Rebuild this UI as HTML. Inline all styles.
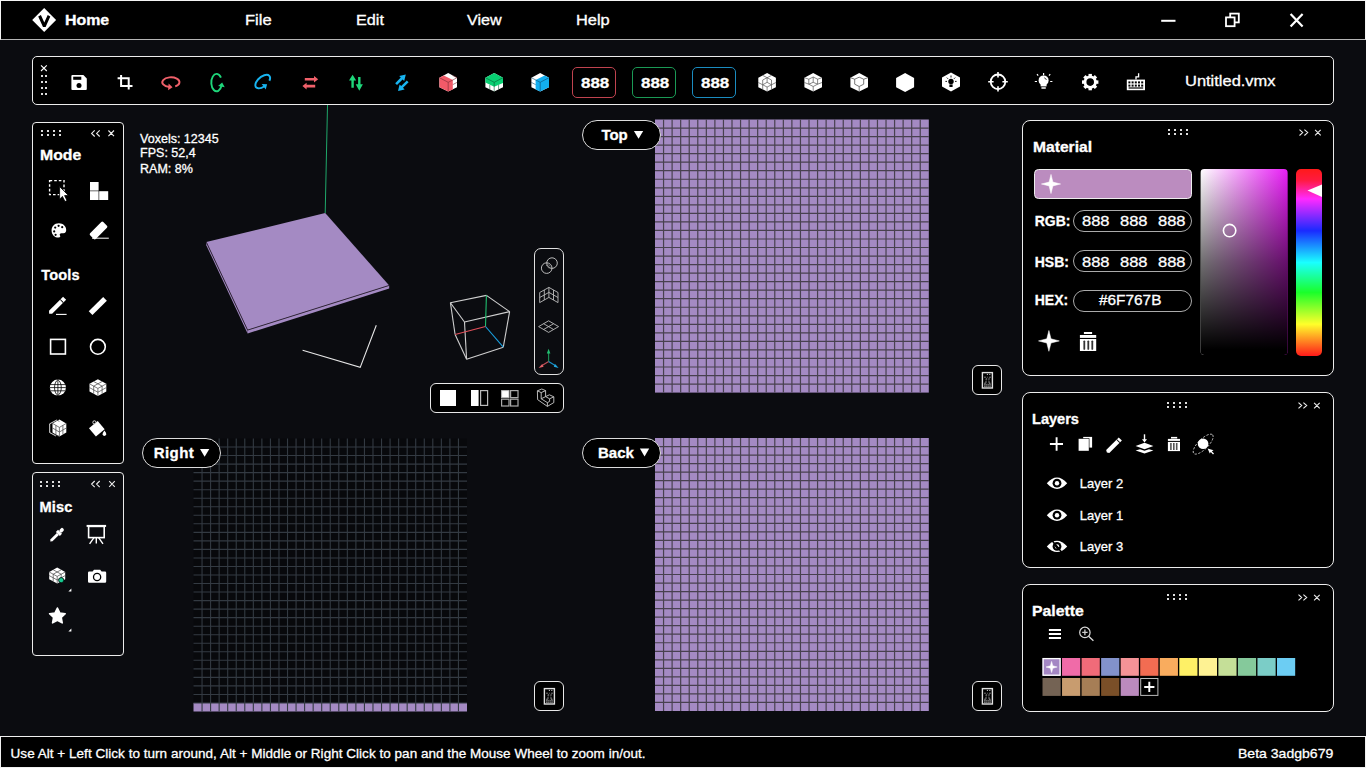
<!DOCTYPE html>
<html><head><meta charset="utf-8">
<style>
*{box-sizing:border-box;margin:0;padding:0}
html,body{width:1366px;height:768px;overflow:hidden;background:#0b0c10;font-family:"Liberation Sans",sans-serif;color:#fff}
.a{position:absolute}
.t{position:absolute;white-space:nowrap;line-height:1;-webkit-text-stroke:0.3px #fff}
svg{position:absolute;left:0;top:0;overflow:visible}
.panel{position:absolute;border:1.5px solid #ececec;background:#000}
.pill{position:absolute;border:1.5px solid #dcdcdc;border-radius:15px;background:#000}
.tab{position:absolute;width:30.2px;height:30.2px;border:1.5px solid #e8e8e8;border-radius:6px;background:#000}
</style></head>
<body>

<div class="a" style="left:0;top:0;width:1366px;height:40px;background:#000;border:1px solid #f4f4f4;border-bottom:1px solid #b4b4b4"></div>
<div class="a" style="left:0;top:736px;width:1366px;height:32px;background:#000;border:1px solid #f0f0f0"></div>
<div class="panel" style="left:32px;top:56px;width:1302px;height:49px;border-radius:5px"></div>
<div class="panel" style="left:32px;top:122px;width:92px;height:342px;border-radius:4px"></div>
<div class="panel" style="left:32px;top:472px;width:92px;height:184px;border-radius:4px;background:#0b0c10"></div>
<div class="panel" style="left:1022px;top:120px;width:312px;height:256px;border-radius:8px"></div>
<div class="panel" style="left:1022px;top:392px;width:312px;height:176px;border-radius:8px"></div>
<div class="panel" style="left:1022px;top:584px;width:312px;height:128px;border-radius:8px"></div>
<svg width="1366" height="768"><rect x="655" y="119.5" width="273.8" height="273.1" fill="#a48ac3"/><path d="M663.56 119.5V392.6M672.11 119.5V392.6M680.67 119.5V392.6M689.23 119.5V392.6M697.78 119.5V392.6M706.34 119.5V392.6M714.89 119.5V392.6M723.45 119.5V392.6M732.01 119.5V392.6M740.56 119.5V392.6M749.12 119.5V392.6M757.67 119.5V392.6M766.23 119.5V392.6M774.79 119.5V392.6M783.34 119.5V392.6M791.90 119.5V392.6M800.46 119.5V392.6M809.01 119.5V392.6M817.57 119.5V392.6M826.12 119.5V392.6M834.68 119.5V392.6M843.24 119.5V392.6M851.79 119.5V392.6M860.35 119.5V392.6M868.91 119.5V392.6M877.46 119.5V392.6M886.02 119.5V392.6M894.57 119.5V392.6M903.13 119.5V392.6M911.69 119.5V392.6M920.24 119.5V392.6M655 128.03H928.8M655 136.57H928.8M655 145.10H928.8M655 153.64H928.8M655 162.17H928.8M655 170.71H928.8M655 179.24H928.8M655 187.78H928.8M655 196.31H928.8M655 204.84H928.8M655 213.38H928.8M655 221.91H928.8M655 230.45H928.8M655 238.98H928.8M655 247.52H928.8M655 256.05H928.8M655 264.58H928.8M655 273.12H928.8M655 281.65H928.8M655 290.19H928.8M655 298.72H928.8M655 307.26H928.8M655 315.79H928.8M655 324.33H928.8M655 332.86H928.8M655 341.39H928.8M655 349.93H928.8M655 358.46H928.8M655 367.00H928.8M655 375.53H928.8M655 384.07H928.8" stroke="#48414f" stroke-width="1.2" fill="none"/><rect x="655" y="438" width="273.8" height="273" fill="#a48ac3"/><path d="M663.56 438V711M672.11 438V711M680.67 438V711M689.23 438V711M697.78 438V711M706.34 438V711M714.89 438V711M723.45 438V711M732.01 438V711M740.56 438V711M749.12 438V711M757.67 438V711M766.23 438V711M774.79 438V711M783.34 438V711M791.90 438V711M800.46 438V711M809.01 438V711M817.57 438V711M826.12 438V711M834.68 438V711M843.24 438V711M851.79 438V711M860.35 438V711M868.91 438V711M877.46 438V711M886.02 438V711M894.57 438V711M903.13 438V711M911.69 438V711M920.24 438V711M655 446.53H928.8M655 455.06H928.8M655 463.59H928.8M655 472.12H928.8M655 480.66H928.8M655 489.19H928.8M655 497.72H928.8M655 506.25H928.8M655 514.78H928.8M655 523.31H928.8M655 531.84H928.8M655 540.38H928.8M655 548.91H928.8M655 557.44H928.8M655 565.97H928.8M655 574.50H928.8M655 583.03H928.8M655 591.56H928.8M655 600.09H928.8M655 608.62H928.8M655 617.16H928.8M655 625.69H928.8M655 634.22H928.8M655 642.75H928.8M655 651.28H928.8M655 659.81H928.8M655 668.34H928.8M655 676.88H928.8M655 685.41H928.8M655 693.94H928.8M655 702.47H928.8" stroke="#48414f" stroke-width="1.2" fill="none"/><rect x="193.5" y="438.5" width="273.5" height="273.0" fill="#08090c"/><rect x="193.5" y="702.95" width="273.5" height="8.55" fill="#a48ac3"/><path d="M202.05 438.5V711.5M210.59 438.5V711.5M219.14 438.5V711.5M227.69 438.5V711.5M236.23 438.5V711.5M244.78 438.5V711.5M253.33 438.5V711.5M261.88 438.5V711.5M270.42 438.5V711.5M278.97 438.5V711.5M287.52 438.5V711.5M296.06 438.5V711.5M304.61 438.5V711.5M313.16 438.5V711.5M321.70 438.5V711.5M330.25 438.5V711.5M338.80 438.5V711.5M347.34 438.5V711.5M355.89 438.5V711.5M364.44 438.5V711.5M372.98 438.5V711.5M381.53 438.5V711.5M390.08 438.5V711.5M398.62 438.5V711.5M407.17 438.5V711.5M415.72 438.5V711.5M424.27 438.5V711.5M432.81 438.5V711.5M441.36 438.5V711.5M449.91 438.5V711.5M458.45 438.5V711.5M193.5 447.03H467.0M193.5 455.56H467.0M193.5 464.09H467.0M193.5 472.62H467.0M193.5 481.16H467.0M193.5 489.69H467.0M193.5 498.22H467.0M193.5 506.75H467.0M193.5 515.28H467.0M193.5 523.81H467.0M193.5 532.34H467.0M193.5 540.88H467.0M193.5 549.41H467.0M193.5 557.94H467.0M193.5 566.47H467.0M193.5 575.00H467.0M193.5 583.53H467.0M193.5 592.06H467.0M193.5 600.59H467.0M193.5 609.12H467.0M193.5 617.66H467.0M193.5 626.19H467.0M193.5 634.72H467.0M193.5 643.25H467.0M193.5 651.78H467.0M193.5 660.31H467.0M193.5 668.84H467.0M193.5 677.38H467.0M193.5 685.91H467.0M193.5 694.44H467.0M193.5 702.97H467.0" stroke="#333a42" stroke-width="1.1" fill="none"/><line x1="327.5" y1="105" x2="325.2" y2="213" stroke="#1fa86a" stroke-width="1"/><polygon points="206.3,242.1 247.6,330.1 247.6,333.4 206.3,245.2" fill="#a48ac3"/><polygon points="247.6,330.1 389.2,285.4 389.2,288.6 247.6,333.4" fill="#a48ac3"/><polygon points="325.2,213.1 389.2,285.4 247.6,330.1 206.3,242.1" fill="#a48ac3"/><polyline points="206.3,242.1 247.6,330.1 389.2,285.4" fill="none" stroke="#2a2030" stroke-width="0.9"/><polyline points="302.6,350.3 360.2,367.4 376.3,325.2" fill="none" stroke="#e6e6e6" stroke-width="1.1"/><line x1="450.4" y1="302.7" x2="486.4" y2="295.4" stroke="#cfcfcf" stroke-width="1.1"/><line x1="486.4" y1="295.4" x2="509.6" y2="311.6" stroke="#cfcfcf" stroke-width="1.1"/><line x1="509.6" y1="311.6" x2="464.5" y2="322" stroke="#cfcfcf" stroke-width="1.1"/><line x1="464.5" y1="322" x2="450.4" y2="302.7" stroke="#cfcfcf" stroke-width="1.1"/><line x1="450.4" y1="302.7" x2="455.1" y2="334.5" stroke="#cfcfcf" stroke-width="1.1"/><line x1="509.6" y1="311.6" x2="503.3" y2="347.2" stroke="#cfcfcf" stroke-width="1.1"/><line x1="464.5" y1="322" x2="466.6" y2="359.2" stroke="#cfcfcf" stroke-width="1.1"/><line x1="455.1" y1="334.5" x2="466.6" y2="359.2" stroke="#cfcfcf" stroke-width="1.1"/><line x1="466.6" y1="359.2" x2="503.3" y2="347.2" stroke="#cfcfcf" stroke-width="1.1"/><line x1="486.4" y1="295.4" x2="485.5" y2="326.5" stroke="#20c070" stroke-width="1.1"/><line x1="485.5" y1="326.5" x2="455.1" y2="334.5" stroke="#e0505a" stroke-width="1.1"/><line x1="485.5" y1="326.5" x2="503.3" y2="347.2" stroke="#1aa0e0" stroke-width="1.1"/></svg>
<div class="pill" style="left:582px;top:120px;width:79px;height:30px"></div>
<div class="pill" style="left:142px;top:438px;width:79px;height:30px"></div>
<div class="pill" style="left:582px;top:438px;width:79px;height:30px"></div>
<div class="tab" style="left:972px;top:365px"></div>
<div class="tab" style="left:534px;top:681px"></div>
<div class="tab" style="left:972px;top:681px"></div>
<div class="a" style="left:534px;top:248px;width:30px;height:127px;border:1.5px solid #e0e0e0;border-radius:7px"></div>
<div class="a" style="left:430px;top:383px;width:134px;height:30px;border:1.5px solid #e8e8e8;border-radius:6px;background:#000"></div>
<svg width="1366" height="768"><polygon points="44.2,8 56.1,20.1 44.2,32.1 32.2,20.1" fill="#fff"/><polygon points="38.2,16.4 40.9,15.0 44.3,22.6 47.7,15.0 50.3,16.4 45.6,27.0 43.0,27.0" fill="#000"/><line x1="1161.2" y1="20.8" x2="1175.5" y2="20.8" stroke="#fff" stroke-width="2"/><rect x="1230.2" y="13.6" width="8.6" height="8.8" fill="none" stroke="#fff" stroke-width="1.8"/><rect x="1226" y="17.4" width="8.6" height="8.8" fill="#000" stroke="#fff" stroke-width="1.8"/><path d="M1290.6 14 L1302.6 26.6 M1302.6 14 L1290.6 26.6" stroke="#fff" stroke-width="2.2"/><path d="M41 65.3 L46.8 71 M46.8 65.3 L41 71" stroke="#fff" stroke-width="1.1"/><rect x="41" y="75" width="2" height="2" fill="#ddd"/><rect x="45" y="75" width="2" height="2" fill="#ddd"/><rect x="41" y="81" width="2" height="2" fill="#ddd"/><rect x="45" y="81" width="2" height="2" fill="#ddd"/><rect x="41" y="87" width="2" height="2" fill="#ddd"/><rect x="45" y="87" width="2" height="2" fill="#ddd"/><rect x="41" y="93" width="2" height="2" fill="#ddd"/><rect x="45" y="93" width="2" height="2" fill="#ddd"/><path d="M72.4 75 H83.4 L86.8 78.4 V89 Q86.8 90 85.8 90 H72.4 Q71.4 90 71.4 89 V76 Q71.4 75 72.4 75 Z" fill="#fff"/><rect x="73.2" y="76.7" width="8.1" height="3.1" fill="#000"/><circle cx="79" cy="85.5" r="2.5" fill="#000"/><path d="M121.1 75 V86 H132.5 M117.6 78.3 H128.7 V89.6" stroke="#fff" stroke-width="2" fill="none"/><path d="M175.20 86.44 A8.6 4.9 0 1 0 169.41 87.03" stroke="#f0606a" stroke-width="1.9" fill="none"/><polygon points="172.55,87.25 168.12,90.34 168.60,83.56" fill="#f0606a"/><path d="M220.94 77.61 A5.3 8.7 0 1 0 221.58 85.58" stroke="#1ed67a" stroke-width="1.9" fill="none"/><polygon points="222.16,82.48 224.73,87.23 218.05,85.99" fill="#1ed67a"/><path d="M269.40 80.78 A8.8 4.8 -40 1 0 264.57 86.20" stroke="#18b4f0" stroke-width="1.9" fill="none"/><polygon points="267.11,84.34 265.73,89.57 261.71,84.08" fill="#18b4f0"/><path d="M304.8 77.9 H314 V75.9 L318.2 79.2 L314 82.5 V80.5 H304.8 Z" fill="#f0606a"/><path d="M315.2 84.8 H306.6 V82.8 L302.4 86.1 L306.6 89.4 V87.4 H315.2 Z" fill="#f0606a"/><path d="M351.4 87.8 V80.6 H349 L352.6 74.7 L356.2 80.6 H353.8 V87.8 Z" fill="#1ed67a"/><path d="M358.1 76.9 V84.2 H355.7 L359.3 90.7 L362.9 84.2 H360.5 V76.9 Z" fill="#1ed67a"/><path d="M395.2 83.2 L400.8 77.6 L399.2 76 L405.8 74.4 L404.2 81 L402.6 79.4 L397 85 Z" fill="#18b4f0"/><path d="M408.6 82.2 L403 87.8 L404.6 89.4 L398 91 L399.6 84.4 L401.2 86 L406.8 80.4 Z" fill="#18b4f0"/><polygon points="448.20,73.10 457.00,77.70 457.00,87.30 448.20,91.60 439.40,87.30 439.40,77.70" fill="#fff" /><polygon points="439.40,77.70 443.80,75.40 452.80,80.00 452.80,89.50 448.20,91.60 439.40,87.30" fill="#f25a68" /><path d="M439.4 77.7 L448.2 82.3 L452.8 80 M448.2 82.3 V91.6 M452.8 80 L457.0 77.7 M452.8 84.6 L457.0 82.4 M452.59999999999997 75.4 L457.0 77.7" stroke="#7a2a34" stroke-width="0.6" fill="none"/><polygon points="494.20,73.10 503.00,77.70 503.00,87.30 494.20,91.60 485.40,87.30 485.40,77.70" fill="#fff" /><polygon points="494.20,73.10 503.00,77.70 503.00,82.90 494.20,86.80 485.40,82.50 485.40,77.70" fill="#08d072" /><path d="M485.4 77.7 L494.2 82.3 L503.0 77.7 M494.2 82.3 V91.6 M489.8 84.9 V89.4 M498.59999999999997 84.9 V89.4" stroke="#0a5a34" stroke-width="0.6" fill="none"/><polygon points="540.20,73.10 549.00,77.70 549.00,87.30 540.20,91.60 531.40,87.30 531.40,77.70" fill="#fff" /><polygon points="535.60,80.00 544.60,75.40 549.00,77.70 549.00,87.30 540.20,91.60 535.60,89.50" fill="#12aef0" /><path d="M531.4000000000001 77.7 L540.2 82.3 L549.0 77.7 M540.2 82.3 V91.6 M531.4000000000001 82.4 L535.6 84.6" stroke="#0a4a70" stroke-width="0.6" fill="none"/><polygon points="767.10,73.10 775.90,77.70 775.90,87.30 767.10,91.60 758.30,87.30 758.30,77.70" fill="#fff" /><path d="M762.7 75.4 L771.5 80 M771.5 75.4 L762.7 80 M758.3000000000001 82.5 L762.7 84.8 M775.9 82.5 L771.5 84.8 M762.7 80 V89.4 M771.5 80 V89.4 M767.1 77.7 V82.3 M762.7 84.8 L767.1 87 L771.5 84.8 M767.1 87 V91.6 M762.7 84.8 L767.1 82.3 L771.5 84.8" stroke="#555" stroke-width="0.7" fill="none"/><polygon points="813.20,73.10 822.00,77.70 822.00,87.30 813.20,91.60 804.40,87.30 804.40,77.70" fill="#fff" /><path d="M808.8000000000001 79.2 L813.2 77 L817.6 79.2 V84.2 L813.2 86.5 L808.8000000000001 84.2 Z M813.2 77 V82.3 L808.8000000000001 84.2 M813.2 82.3 L817.6 84.2 M813.2 86.5 V91.6 M804.4000000000001 82.5 L808.8000000000001 84.2 M822.0 82.5 L817.6 84.2 M804.4000000000001 77.7 L808.8000000000001 79.2 M822.0 77.7 L817.6 79.2" stroke="#555" stroke-width="0.7" fill="none"/><polygon points="859.20,73.10 868.00,77.70 868.00,87.30 859.20,91.60 850.40,87.30 850.40,77.70" fill="#fff" /><path d="M854.7 79.2 L859.2 77.2 L863.7 79.2 V84.2 L859.2 86.5 L854.7 84.2 Z M859.2 86.5 V91.6 M850.4000000000001 77.7 L854.7 79.2 M868.0 77.7 L863.7 79.2" stroke="#555" stroke-width="0.8" fill="none"/><polygon points="905.10,73.10 914.10,77.90 914.10,87.30 905.10,91.90 896.10,87.30 896.10,77.90" fill="#fff" /><polygon points="951.00,72.40 960.00,77.40 960.00,86.60 951.00,91.60 942.00,86.60 942.00,77.40" fill="#fff" /><circle cx="951" cy="81.4" r="2.7" fill="#000"/><rect x="949.4" y="84.4" width="3.2" height="2.6" fill="#000"/><path d="M951 75.5 V77.5 M946.8 77.6 L948 78.8 M955.2 77.6 L954 78.8 M945.4 81.4 H947 M956.6 81.4 H955" stroke="#000" stroke-width="0.9"/><circle cx="998" cy="81.8" r="7.3" fill="none" stroke="#fff" stroke-width="1.8"/><path d="M998 72 V77.4 M998 86.2 V91.6 M988.2 81.8 H993.6 M1002.4 81.8 H1007.8" stroke="#fff" stroke-width="1.6"/><circle cx="1043.6" cy="80.4" r="5" fill="#fff"/><path d="M1040.6 83.6 H1046.6 V86.4 H1040.6 Z" fill="#fff"/><rect x="1041.1999999999998" y="87.2" width="4.8" height="1.6" rx="0.8" fill="#fff"/><path d="M1043.6 73 V75.2 M1038.1999999999998 75.6 L1037.0 74.2 M1049.0 75.6 L1050.1999999999998 74.2 M1037.0 81.5 H1034.8 M1050.1999999999998 81.5 H1052.3999999999999" stroke="#fff" stroke-width="1.2"/><path d="M1044.1999999999998 77.8 A3 3 0 0 1 1046.3999999999999 80" stroke="#000" stroke-width="0.7" fill="none"/><rect x="1088.50" y="73.90" width="3.4" height="4" transform="rotate(0 1090.2 82.1)" fill="#fff"/><rect x="1088.50" y="73.90" width="3.4" height="4" transform="rotate(45 1090.2 82.1)" fill="#fff"/><rect x="1088.50" y="73.90" width="3.4" height="4" transform="rotate(90 1090.2 82.1)" fill="#fff"/><rect x="1088.50" y="73.90" width="3.4" height="4" transform="rotate(135 1090.2 82.1)" fill="#fff"/><rect x="1088.50" y="73.90" width="3.4" height="4" transform="rotate(180 1090.2 82.1)" fill="#fff"/><rect x="1088.50" y="73.90" width="3.4" height="4" transform="rotate(225 1090.2 82.1)" fill="#fff"/><rect x="1088.50" y="73.90" width="3.4" height="4" transform="rotate(270 1090.2 82.1)" fill="#fff"/><rect x="1088.50" y="73.90" width="3.4" height="4" transform="rotate(315 1090.2 82.1)" fill="#fff"/><circle cx="1090.2" cy="82.1" r="5.2" fill="none" stroke="#fff" stroke-width="2.8"/><rect x="1126.8" y="79.6" width="18.2" height="10.6" fill="#fff"/><path d="M1136 79.6 V76.8 H1138.6 V73.2" stroke="#fff" stroke-width="1.3" fill="none"/><rect x="1128.4" y="81.4" width="2" height="2" fill="#000"/><rect x="1131.6" y="81.4" width="2" height="2" fill="#000"/><rect x="1134.8" y="81.4" width="2" height="2" fill="#000"/><rect x="1138.0" y="81.4" width="2" height="2" fill="#000"/><rect x="1141.2" y="81.4" width="2" height="2" fill="#000"/><rect x="1128.4" y="84.6" width="2" height="2" fill="#000"/><rect x="1131.6" y="84.6" width="2" height="2" fill="#000"/><rect x="1134.8" y="84.6" width="2" height="2" fill="#000"/><rect x="1138.0" y="84.6" width="2" height="2" fill="#000"/><rect x="1141.2" y="84.6" width="2" height="2" fill="#000"/><rect x="1128.6" y="87.4" width="14.6" height="1.2" fill="#000"/><rect x="41" y="130" width="2" height="2" fill="#ddd"/><rect x="41" y="134" width="2" height="2" fill="#ddd"/><rect x="47" y="130" width="2" height="2" fill="#ddd"/><rect x="47" y="134" width="2" height="2" fill="#ddd"/><rect x="53" y="130" width="2" height="2" fill="#ddd"/><rect x="53" y="134" width="2" height="2" fill="#ddd"/><rect x="59" y="130" width="2" height="2" fill="#ddd"/><rect x="59" y="134" width="2" height="2" fill="#ddd"/><path d="M94.7 130.3 L91.6 133.4 L94.7 136.5 M99.7 130.3 L96.6 133.4 L99.7 136.5 M108.4 130.5 L114 136.1 M114 130.5 L108.4 136.1" stroke="#eee" stroke-width="1.1" fill="none"/><rect x="40" y="481" width="2" height="2" fill="#ddd"/><rect x="40" y="485" width="2" height="2" fill="#ddd"/><rect x="46" y="481" width="2" height="2" fill="#ddd"/><rect x="46" y="485" width="2" height="2" fill="#ddd"/><rect x="52" y="481" width="2" height="2" fill="#ddd"/><rect x="52" y="485" width="2" height="2" fill="#ddd"/><rect x="58" y="481" width="2" height="2" fill="#ddd"/><rect x="58" y="485" width="2" height="2" fill="#ddd"/><path d="M94.7 481.0 L91.6 484.1 L94.7 487.20000000000005 M99.7 481.0 L96.6 484.1 L99.7 487.20000000000005 M109.2 481.20000000000005 L114.8 486.8 M114.8 481.20000000000005 L109.2 486.8" stroke="#eee" stroke-width="1.1" fill="none"/><rect x="49.6" y="180.6" width="14.4" height="14" fill="none" stroke="#fff" stroke-width="1.4" stroke-dasharray="2.6 2"/><path d="M59.6 186.6 L59.6 199.2 L62.4 196.4 L65 201.6 L67 200.6 L64.6 195.6 L68.4 195.4 Z" fill="#fff" stroke="#000" stroke-width="0.8"/><rect x="90" y="182" width="8.6" height="8.6" fill="#fff"/><rect x="90" y="191.2" width="8.6" height="8.8" fill="#fff"/><rect x="99.2" y="191.2" width="9" height="8.8" fill="#fff"/><path d="M58.9 223.2 C54.2 223.2 51.6 226.6 51.6 230.4 C51.6 234.6 54.6 237.6 58.6 237.6 C60.2 237.6 60.6 236.6 60 235.6 C59.2 234.2 60 233.2 61.4 233.2 L63.4 233.2 C65.4 233.2 66.2 231.8 66.2 230 C66.2 226 63 223.2 58.9 223.2 Z" fill="#fff"/><circle cx="55.2" cy="227.6" r="1.1" fill="#000"/><circle cx="58.6" cy="225.8" r="1.1" fill="#000"/><circle cx="62.2" cy="227.2" r="1.1" fill="#000"/><circle cx="54.2" cy="231.4" r="1.1" fill="#000"/><circle cx="55.6" cy="234.8" r="1.1" fill="#000"/><g transform="rotate(-45 98.6 230.4)"><rect x="89.2" y="226.4" width="18.6" height="8" rx="1.4" fill="#fff"/></g><path d="M92 238.2 H108.8" stroke="#fff" stroke-width="1" /><g transform="rotate(-45 57.8 305)"><path d="M47.6 302.8 H64.6 L67.4 302.8 V307.2 H47.6 L45.6 305 Z" fill="#fff"/><rect x="63" y="302.8" width="0.9" height="4.4" fill="#000"/></g><path d="M56 314.4 H66.6" stroke="#fff" stroke-width="1.1"/><g transform="rotate(-45 97.8 306)"><rect x="87.6" y="303.4" width="20.4" height="5.2" fill="#fff"/></g><rect x="50.6" y="339.4" width="14.8" height="14.6" fill="none" stroke="#fff" stroke-width="1.6"/><circle cx="97.9" cy="346.8" r="7.4" fill="none" stroke="#fff" stroke-width="1.6"/><circle cx="57.9" cy="387.6" r="8" fill="#fff"/><path d="M49.9 384.6 H65.9 M49.9 387.6 H65.9 M50.4 390.8 H65.4 M57.9 379.6 V395.6 M57.9 379.6 C53.4 382.6 53.4 392.6 57.9 395.6 M57.9 379.6 C62.4 382.6 62.4 392.6 57.9 395.6" stroke="#000" stroke-width="0.8" fill="none"/><polygon points="97.90,379.20 106.30,383.82 106.30,391.38 97.90,396.00 89.50,391.38 89.50,383.82" fill="#fff" /><path d="M89.5 383.82000000000005 L97.9 388.44000000000005 L106.30000000000001 383.82000000000005 M97.9 388.44000000000005 V396.0 M93.7 381.51000000000005 L102.10000000000001 386.13000000000005 M102.10000000000001 381.51000000000005 L93.7 386.13000000000005 M93.7 386.13000000000005 V393.69 M102.10000000000001 386.13000000000005 V393.69 M89.5 387.6 L97.9 392.22 L106.30000000000001 387.6" stroke="#444" stroke-width="0.7" fill="none"/><polygon points="59.40,419.60 66.30,423.40 66.30,432.40 59.40,436.40 52.50,432.40 52.50,423.40" fill="#fff" /><path d="M49.7 423.8 L56.9 420 L59.4 421.4 M49.7 423.8 V432.6 L59.4 436.4 M52.5 423.4 L59.4 427.4 L66.3 423.4 M59.4 427.4 V436.4 M55.9 425.4 V434.4 M62.9 425.4 V434.4 M52.5 428 L59.4 432 L66.3 428" stroke="#444" stroke-width="0.7" fill="none"/><path d="M49.7 423.8 L56.9 420 M49.7 423.8 V432.6 L55.9 436" stroke="#fff" stroke-width="0.8" fill="none"/><g transform="rotate(-40 96.6 428.6)"><rect x="91" y="423.4" width="11.4" height="10.8" fill="#fff"/></g><circle cx="94.4" cy="422.4" r="1.6" fill="none" stroke="#ddd" stroke-width="1"/><path d="M104.4 430.6 Q106.6 433.2 106.2 434.6 A1.9 1.9 0 0 1 102.6 434.6 Q102.4 433.2 104.4 430.6 Z" fill="#fff"/><g transform="rotate(-45 57.6 534.2)"><path d="M47.2 534.2 L49 532.8 H58 V535.6 H49 Z" fill="#fff"/><rect x="58" y="531.4" width="3" height="5.6" fill="#fff"/><rect x="61" y="532.4" width="4.6" height="3.6" rx="1.6" fill="#fff"/></g><rect x="86.6" y="524.9" width="19.5" height="2" fill="#fff"/><rect x="88.6" y="526.4" width="15.6" height="11.2" fill="none" stroke="#fff" stroke-width="1.6"/><path d="M96.3 537.6 V543.6 M94 537.6 L89.6 543.8 M98.6 537.6 L103 543.8" stroke="#fff" stroke-width="1.4"/><polygon points="57.20,567.60 65.20,572.00 65.20,579.20 57.20,583.60 49.20,579.20 49.20,572.00" fill="#fff" /><path d="M49.2 572.0 L57.2 576.4 L65.2 572.0 M57.2 576.4 V583.6 M53.2 569.8000000000001 L61.2 574.2 M61.2 569.8000000000001 L53.2 574.2 M53.2 574.2 V581.4 M61.2 574.2 V581.4 M49.2 575.6 L57.2 580.0 L65.2 575.6" stroke="#444" stroke-width="0.7" fill="none"/><circle cx="61.2" cy="580.2" r="2.6" fill="#17c890" stroke="#000" stroke-width="0.8"/><polygon points="71.4,588.6 71.4,591.6 68.4,591.6" fill="#fff"/><path d="M88 572.8 Q88 571.6 89.2 571.6 H92.6 L94 569.8 H100.2 L101.6 571.6 H105 Q106.2 571.6 106.2 572.8 V581.6 Q106.2 582.8 105 582.8 H89.2 Q88 582.8 88 581.6 Z" fill="#fff"/><circle cx="97.1" cy="577" r="3.6" fill="none" stroke="#000" stroke-width="1.3"/><polygon points="57.40,608.00 59.75,612.96 65.20,613.67 61.20,617.44 62.22,622.83 57.40,620.20 52.58,622.83 53.60,617.44 49.60,613.67 55.05,612.96" fill="#fff" stroke="#fff" stroke-width="1.6" stroke-linejoin="round"/><polygon points="71.4,628.6 71.4,631.6 68.4,631.6" fill="#fff"/><circle cx="546.7" cy="268.1" r="5.3" fill="none" stroke="#bbb" stroke-width="1"/><circle cx="552" cy="263.1" r="5.3" fill="none" stroke="#bbb" stroke-width="1"/><path d="M547.6 263.6 L550.6 267.2 M546.4 265.2 L549.2 268.6" stroke="#aaa" stroke-width="0.8" stroke-dasharray="1.2 0.8"/><path d="M548.9 287.4 L539.7 292.5 V302.6 L548.9 297.4 L558 302.6 V292.5 Z M548.9 287.4 V297.4 M544.3 290 V300 M553.5 290 V300 M539.7 297.5 L548.9 292.4 L558 297.5" stroke="#bbb" stroke-width="0.9" fill="none" stroke-linejoin="round"/><path d="M548.6 320.8 L558.6 326.6 L548.6 332.4 L538.6 326.6 Z M543.6 323.7 L553.6 329.5 M553.6 323.7 L543.6 329.5" stroke="#bbb" stroke-width="0.9" fill="none"/><path d="M548.6 361.6 V352" stroke="#1a8a52" stroke-width="1.2"/><polygon points="546.8,353.4 548.6,348.8 550.4,353.4" fill="#20c070"/><path d="M548.6 361.6 L541.2 366" stroke="#c05058" stroke-width="1.2"/><polygon points="542.2,364 538.6,368 543.6,366.8" fill="#e06068"/><path d="M548.6 361.6 L556 366" stroke="#1a90c8" stroke-width="1.2"/><polygon points="553.8,366.8 558.6,368 555,364" fill="#20a8e0"/><rect x="440" y="390" width="16" height="16" fill="#fff"/><rect x="471" y="390" width="7.6" height="16" fill="#fff"/><rect x="480.6" y="390.6" width="7" height="14.8" fill="none" stroke="#bbb" stroke-width="1.2"/><rect x="501.6" y="390.6" width="7.4" height="7" fill="#fff" stroke="#bbb" stroke-width="1"/><rect x="510.6" y="390.6" width="7.4" height="7" fill="none" stroke="#aaa" stroke-width="1.2"/><rect x="501.6" y="399.2" width="7.4" height="6.8" fill="none" stroke="#aaa" stroke-width="1.2"/><rect x="510.6" y="399.2" width="7.4" height="6.8" fill="none" stroke="#aaa" stroke-width="1.2"/><path d="M537.4 390.8 L541.8 389 L545.6 390.6 V396.6 L549.4 394.8 L553.8 396.8 V402.6 L547.4 406.4 L537.6 399.6 Z M537.4 390.8 L541.2 392.6 L545.6 390.6 M541.2 392.6 V398.8 L545.6 396.6 M541.2 398.8 L547.4 402.6 V406.4 M545.6 396.6 L549.6 398.8 L553.8 396.8 M547.4 402.6 L549.6 401.4 V398.8" stroke="#ccc" stroke-width="0.9" fill="none"/><rect x="982.4" y="372.6" width="10" height="15.4" fill="none" stroke="#e0e0e0" stroke-width="1.4"/><rect x="984.0" y="383.8" width="6.8" height="3.2" fill="#777"/><path d="M984.0 385.40000000000003 H990.8 M985.8 383.8 V387.0 M987.5 383.8 V387.0 M989.1999999999999 383.8 V387.0" stroke="#222" stroke-width="0.5"/><circle cx="985.0" cy="377.20000000000005" r="0.65" fill="#bbb"/><circle cx="990.0" cy="377.20000000000005" r="0.65" fill="#bbb"/><circle cx="986.0" cy="382.0" r="0.65" fill="#bbb"/><circle cx="989.0" cy="382.0" r="0.65" fill="#bbb"/><circle cx="987.4" cy="374.40000000000003" r="0.65" fill="#bbb"/><circle cx="989.8" cy="374.40000000000003" r="0.65" fill="#bbb"/><circle cx="985.0" cy="383.20000000000005" r="0.65" fill="#bbb"/><circle cx="989.8" cy="383.20000000000005" r="0.65" fill="#bbb"/><path d="M985.1999999999999 379.40000000000003 L986.8 378.40000000000003 L986.1999999999999 380.6 M987.8 379.40000000000003 L989.4 378.40000000000003 L988.8 380.6 M986.8 377.20000000000005 H988.1999999999999" stroke="#999" stroke-width="0.6" fill="none"/><rect x="544.4" y="688.6" width="10" height="15.4" fill="none" stroke="#e0e0e0" stroke-width="1.4"/><rect x="546.0" y="699.8000000000001" width="6.8" height="3.2" fill="#777"/><path d="M546.0 701.4 H552.8 M547.8 699.8000000000001 V703.0 M549.5 699.8000000000001 V703.0 M551.1999999999999 699.8000000000001 V703.0" stroke="#222" stroke-width="0.5"/><circle cx="547.0" cy="693.2" r="0.65" fill="#bbb"/><circle cx="552.0" cy="693.2" r="0.65" fill="#bbb"/><circle cx="548.0" cy="698.0" r="0.65" fill="#bbb"/><circle cx="551.0" cy="698.0" r="0.65" fill="#bbb"/><circle cx="549.4" cy="690.4" r="0.65" fill="#bbb"/><circle cx="551.8" cy="690.4" r="0.65" fill="#bbb"/><circle cx="547.0" cy="699.2" r="0.65" fill="#bbb"/><circle cx="551.8" cy="699.2" r="0.65" fill="#bbb"/><path d="M547.1999999999999 695.4 L548.8 694.4 L548.1999999999999 696.6 M549.8 695.4 L551.4 694.4 L550.8 696.6 M548.8 693.2 H550.1999999999999" stroke="#999" stroke-width="0.6" fill="none"/><rect x="982.4" y="688.6" width="10" height="15.4" fill="none" stroke="#e0e0e0" stroke-width="1.4"/><rect x="984.0" y="699.8000000000001" width="6.8" height="3.2" fill="#777"/><path d="M984.0 701.4 H990.8 M985.8 699.8000000000001 V703.0 M987.5 699.8000000000001 V703.0 M989.1999999999999 699.8000000000001 V703.0" stroke="#222" stroke-width="0.5"/><circle cx="985.0" cy="693.2" r="0.65" fill="#bbb"/><circle cx="990.0" cy="693.2" r="0.65" fill="#bbb"/><circle cx="986.0" cy="698.0" r="0.65" fill="#bbb"/><circle cx="989.0" cy="698.0" r="0.65" fill="#bbb"/><circle cx="987.4" cy="690.4" r="0.65" fill="#bbb"/><circle cx="989.8" cy="690.4" r="0.65" fill="#bbb"/><circle cx="985.0" cy="699.2" r="0.65" fill="#bbb"/><circle cx="989.8" cy="699.2" r="0.65" fill="#bbb"/><path d="M985.1999999999999 695.4 L986.8 694.4 L986.1999999999999 696.6 M987.8 695.4 L989.4 694.4 L988.8 696.6 M986.8 693.2 H988.1999999999999" stroke="#999" stroke-width="0.6" fill="none"/><polygon points="633.9,131 643.1999999999999,131 638.55,138.8" fill="#fff"/><polygon points="200,448.9 209.3,448.9 204.65,456.7" fill="#fff"/><polygon points="639.9,448.6 649.1999999999999,448.6 644.55,456.40000000000003" fill="#fff"/><rect x="1168" y="129" width="2" height="2" fill="#ddd"/><rect x="1168" y="133" width="2" height="2" fill="#ddd"/><rect x="1174" y="129" width="2" height="2" fill="#ddd"/><rect x="1174" y="133" width="2" height="2" fill="#ddd"/><rect x="1180" y="129" width="2" height="2" fill="#ddd"/><rect x="1180" y="133" width="2" height="2" fill="#ddd"/><rect x="1186" y="129" width="2" height="2" fill="#ddd"/><rect x="1186" y="133" width="2" height="2" fill="#ddd"/><path d="M1299.5 129.7 L1302.7 132.6 L1299.5 135.5 M1304.4 129.7 L1307.7 132.6 L1304.4 135.5 M1315.1 129.9 L1320.7 135.4 M1320.7 129.9 L1315.1 135.4" stroke="#eee" stroke-width="1.1" fill="none"/><rect x="1167" y="402" width="2" height="2" fill="#ddd"/><rect x="1167" y="406" width="2" height="2" fill="#ddd"/><rect x="1173" y="402" width="2" height="2" fill="#ddd"/><rect x="1173" y="406" width="2" height="2" fill="#ddd"/><rect x="1179" y="402" width="2" height="2" fill="#ddd"/><rect x="1179" y="406" width="2" height="2" fill="#ddd"/><rect x="1185" y="402" width="2" height="2" fill="#ddd"/><rect x="1185" y="406" width="2" height="2" fill="#ddd"/><path d="M1298.5 402.6 L1301.7 405.5 L1298.5 408.4 M1303.4 402.6 L1306.7 405.5 L1303.4 408.4 M1314.1 402.8 L1319.7 408.3 M1319.7 402.8 L1314.1 408.3" stroke="#eee" stroke-width="1.1" fill="none"/><rect x="1167" y="594" width="2" height="2" fill="#ddd"/><rect x="1167" y="598" width="2" height="2" fill="#ddd"/><rect x="1173" y="594" width="2" height="2" fill="#ddd"/><rect x="1173" y="598" width="2" height="2" fill="#ddd"/><rect x="1179" y="594" width="2" height="2" fill="#ddd"/><rect x="1179" y="598" width="2" height="2" fill="#ddd"/><rect x="1185" y="594" width="2" height="2" fill="#ddd"/><rect x="1185" y="598" width="2" height="2" fill="#ddd"/><path d="M1298.5 594.6 L1301.7 597.5 L1298.5 600.4 M1303.4 594.6 L1306.7 597.5 L1303.4 600.4 M1314.1 594.8 L1319.7 600.3 M1319.7 594.8 L1314.1 600.3" stroke="#eee" stroke-width="1.1" fill="none"/><rect x="1034.5" y="169.5" width="157" height="29" rx="4" fill="#bb8cbf" stroke="#eee" stroke-width="1"/><polygon points="1051.00,174.40 1052.90,182.10 1060.60,184.00 1052.90,185.90 1051.00,193.60 1049.10,185.90 1041.40,184.00 1049.10,182.10" fill="#fff" stroke="#fff" stroke-width="0.5" stroke-linejoin="round"/><rect x="1073.5" y="210.5" width="118" height="21" rx="10.5" fill="none" stroke="#aaa" stroke-width="1"/><rect x="1073.5" y="250.5" width="118" height="21" rx="10.5" fill="none" stroke="#aaa" stroke-width="1"/><rect x="1073.5" y="290.5" width="118" height="21" rx="10.5" fill="none" stroke="#aaa" stroke-width="1"/><defs>
<linearGradient id="gh" x1="0" y1="0" x2="1" y2="0"><stop offset="0" stop-color="#fff"/><stop offset="1" stop-color="#e81ef6"/></linearGradient>
<linearGradient id="gv" x1="0" y1="0" x2="0" y2="1"><stop offset="0" stop-color="#000" stop-opacity="0"/><stop offset="0.5" stop-color="#000" stop-opacity="0.56"/><stop offset="0.97" stop-color="#000" stop-opacity="1"/></linearGradient>
<linearGradient id="hue" x1="0" y1="0" x2="0" y2="1">
<stop offset="0" stop-color="#ff1a1a"/><stop offset="0.06" stop-color="#ff1a40"/><stop offset="0.16" stop-color="#ff2aff"/><stop offset="0.33" stop-color="#1a2aff"/><stop offset="0.5" stop-color="#1affff"/><stop offset="0.66" stop-color="#1aff2a"/><stop offset="0.83" stop-color="#ffff2a"/><stop offset="1" stop-color="#ff1a1a"/>
</linearGradient>
<clipPath id="gclip"><rect x="1200.4" y="169" width="87.4" height="186" rx="4"/></clipPath>
</defs><g clip-path="url(#gclip)"><rect x="1200.4" y="169" width="87.4" height="186" fill="url(#gh)"/><rect x="1200.4" y="169" width="87.4" height="186" fill="url(#gv)"/></g><circle cx="1229.6" cy="230.6" r="6.2" fill="none" stroke="#fff" stroke-width="1.6"/><rect x="1296" y="169" width="26" height="187" rx="5" fill="url(#hue)"/><polygon points="1307.5,190.6 1322,184.6 1322,197" fill="#fff"/><polygon points="1048.90,330.50 1051.00,338.80 1059.30,340.90 1051.00,343.00 1048.90,351.30 1046.80,343.00 1038.50,340.90 1046.80,338.80" fill="#fff" stroke="#fff" stroke-width="0.5" stroke-linejoin="round"/><rect x="1083.9" y="332" width="8.2" height="2" fill="#fff"/><rect x="1079.9" y="335" width="16.3" height="2.9" fill="#fff"/><rect x="1079.9" y="339" width="16.3" height="12" fill="#fff"/><rect x="1083.4" y="340.4" width="1.8" height="9.4" rx="0.9" fill="#333"/><rect x="1087.4" y="340.4" width="1.8" height="9.4" rx="0.9" fill="#333"/><rect x="1091.4" y="340.4" width="1.8" height="9.4" rx="0.9" fill="#333"/><path d="M1049.9 444 H1063 M1056.6 437.3 V450.8" stroke="#fff" stroke-width="1.9"/><rect x="1083.2" y="436.9" width="8.9" height="10.7" fill="#fff"/><rect x="1077.8" y="438.2" width="11.6" height="13.2" fill="#000"/><rect x="1078.6" y="438.8" width="10.2" height="12" fill="#fff"/><g transform="rotate(-45 1115.3 444)"><path d="M1104.6 441.8 H1122.4 V446.2 H1104.6 L1103.4 444 Z" fill="#fff"/><rect x="1119" y="441.8" width="0.9" height="4.4" fill="#000"/></g><path d="M1144.5 434.3 V440.6" stroke="#fff" stroke-width="1.4"/><polygon points="1142,439.2 1147,439.2 1144.5,442.6" fill="#fff"/><polygon points="1135.6,446 1144.5,442.8 1153.4,446 1144.5,449.2" fill="#fff"/><polygon points="1135.6,450.6 1140,449.2 1144.5,450.8 1149,449.2 1153.4,450.6 1144.5,453.6" fill="#fff"/><rect x="1171" y="436.9" width="6.2" height="1.6" fill="#fff"/><rect x="1167.9" y="438.9" width="12.1" height="2" fill="#fff"/><rect x="1167.9" y="441.9" width="12.1" height="9.2" fill="#fff"/><rect x="1170.1" y="443" width="1.6" height="7" fill="#555"/><rect x="1173" y="443" width="1.6" height="7" fill="#555"/><rect x="1175.9" y="443" width="1.6" height="7" fill="#555"/><g transform="rotate(-45 1203.6 444)"><ellipse cx="1203.2" cy="443.8" rx="13.2" ry="5" fill="none" stroke="#ccc" stroke-width="0.9" stroke-dasharray="2.2 1.6"/></g><circle cx="1203.1" cy="443.8" r="5.3" fill="#fff"/><path d="M1207.6 448.6 L1213.6 450.2 L1211.8 451.2 L1214 453.6 L1213 454.4 L1210.8 452 L1209.8 453.6 Z" fill="#fff"/><path d="M1046.8 483.2 Q1057 471.8 1067.2 483.2 Q1057 494.59999999999997 1046.8 483.2 Z" fill="#fff"/><circle cx="1057" cy="483.2" r="4.4" fill="#000"/><circle cx="1057" cy="483.2" r="2.2" fill="#fff"/><path d="M1046.8 515.2 Q1057 503.80000000000007 1067.2 515.2 Q1057 526.6 1046.8 515.2 Z" fill="#fff"/><circle cx="1057" cy="515.2" r="4.4" fill="#000"/><circle cx="1057" cy="515.2" r="2.2" fill="#fff"/><path d="M1046.8 546.4 Q1057 535.0 1067.2 546.4 Q1057 557.8 1046.8 546.4 Z" fill="#fff"/><circle cx="1057" cy="546.4" r="4.4" fill="#000"/><circle cx="1057" cy="546.4" r="2.2" fill="#fff"/><path d="M1052.4 541.0 L1061.2 551.8" stroke="#000" stroke-width="1.6"/><path d="M1054.8 544.8 L1059 549.4" stroke="#000" stroke-width="2.4"/><path d="M1048.9 630 H1061 M1048.9 634 H1061 M1048.9 637.9 H1061" stroke="#fff" stroke-width="2"/><circle cx="1084.9" cy="632.4" r="5.2" fill="none" stroke="#ddd" stroke-width="1.2"/><path d="M1088.6 636.2 L1093.4 640.8" stroke="#ddd" stroke-width="1.3"/><path d="M1082.2 632.4 H1087.6 M1084.9 629.6 V635.2" stroke="#ccc" stroke-width="1.3"/><rect x="1042.50" y="658" width="18.2" height="17.8" fill="#a487c4"/><rect x="1062.04" y="658" width="18.2" height="17.8" fill="#f06ba8"/><rect x="1081.58" y="658" width="18.2" height="17.8" fill="#f06b79"/><rect x="1101.12" y="658" width="18.2" height="17.8" fill="#8292cb"/><rect x="1120.66" y="658" width="18.2" height="17.8" fill="#f59397"/><rect x="1140.20" y="658" width="18.2" height="17.8" fill="#f26c52"/><rect x="1159.74" y="658" width="18.2" height="17.8" fill="#f9ac5e"/><rect x="1179.28" y="658" width="18.2" height="17.8" fill="#fef066"/><rect x="1198.82" y="658" width="18.2" height="17.8" fill="#fef293"/><rect x="1218.36" y="658" width="18.2" height="17.8" fill="#c5df98"/><rect x="1237.90" y="658" width="18.2" height="17.8" fill="#85c99b"/><rect x="1257.44" y="658" width="18.2" height="17.8" fill="#7bcdc7"/><rect x="1276.98" y="658" width="18.2" height="17.8" fill="#6ccdf3"/><rect x="1042.50" y="678" width="18.2" height="17.9" fill="#746354"/><rect x="1062.04" y="678" width="18.2" height="17.9" fill="#c89c6f"/><rect x="1081.58" y="678" width="18.2" height="17.9" fill="#a67e56"/><rect x="1101.12" y="678" width="18.2" height="17.9" fill="#7a4f28"/><rect x="1120.66" y="678" width="18.2" height="17.9" fill="#bb8abd"/><rect x="1043.10" y="658.6" width="17" height="16.6" fill="none" stroke="#fff" stroke-width="1.3"/><polygon points="1051.60,661.40 1052.80,665.80 1057.20,667.00 1052.80,668.20 1051.60,672.60 1050.40,668.20 1046.00,667.00 1050.40,665.80" fill="#fff" stroke="#fff" stroke-width="0.5" stroke-linejoin="round"/><rect x="1140.70" y="678.5" width="17.2" height="16.9" fill="#000" stroke="#bbb" stroke-width="1"/><path d="M1144.20 687 H1154.40 M1149.30 681.8 V692" stroke="#fff" stroke-width="1.9"/></svg>
<div class="t" style="left:65.4px;top:13.15px;font-size:14px;font-weight:bold;color:#fff;letter-spacing:0px;transform:scaleX(1.137);transform-origin:0 0;">Home</div>
<div class="t" style="left:245.4px;top:13.05px;font-size:14px;font-weight:normal;color:#fff;letter-spacing:0px;transform:scaleX(1.18);transform-origin:0 0;">File</div>
<div class="t" style="left:355.8px;top:13.05px;font-size:14px;font-weight:normal;color:#fff;letter-spacing:0px;transform:scaleX(1.157);transform-origin:0 0;">Edit</div>
<div class="t" style="left:467.4px;top:13.05px;font-size:14px;font-weight:normal;color:#fff;letter-spacing:0px;transform:scaleX(1.15);transform-origin:0 0;">View</div>
<div class="t" style="left:575.6px;top:13.05px;font-size:14px;font-weight:normal;color:#fff;letter-spacing:0px;transform:scaleX(1.17);transform-origin:0 0;">Help</div>
<div class="a" style="left:572px;top:67px;width:44px;height:31px;border:1.5px solid #c0434f;border-radius:5px"></div>
<div class="t" style="left:580.5px;top:74.60px;font-size:15px;font-weight:bold;color:#fff;letter-spacing:0px;transform:scaleX(1.13);transform-origin:0 0;">888</div>
<div class="a" style="left:632px;top:67px;width:44px;height:31px;border:1.5px solid #1a9a55;border-radius:5px"></div>
<div class="t" style="left:640.5px;top:74.60px;font-size:15px;font-weight:bold;color:#fff;letter-spacing:0px;transform:scaleX(1.13);transform-origin:0 0;">888</div>
<div class="a" style="left:692px;top:67px;width:44px;height:31px;border:1.5px solid #1a8cc0;border-radius:5px"></div>
<div class="t" style="left:700.5px;top:74.60px;font-size:15px;font-weight:bold;color:#fff;letter-spacing:0px;transform:scaleX(1.13);transform-origin:0 0;">888</div>
<div class="t" style="left:1185px;top:73.10px;font-size:15px;font-weight:normal;color:#fff;letter-spacing:0px;transform:scaleX(1.097);transform-origin:0 0;">Untitled.vmx</div>
<div class="t" style="left:40.2px;top:147.84px;font-size:14.6px;font-weight:bold;color:#fff;letter-spacing:0px;transform:scaleX(1.082);transform-origin:0 0;">Mode</div>
<div class="t" style="left:41.3px;top:268.44px;font-size:14.6px;font-weight:bold;color:#fff;letter-spacing:0.1px;">Tools</div>
<div class="t" style="left:39.6px;top:500.44px;font-size:14.6px;font-weight:bold;color:#fff;letter-spacing:0.1px;">Misc</div>
<div class="t" style="left:140.1px;top:132.62px;font-size:12.5px;font-weight:normal;color:#fff;letter-spacing:0px;">Voxels: 12345</div>
<div class="t" style="left:140.1px;top:147.42px;font-size:12.5px;font-weight:normal;color:#fff;letter-spacing:0px;">FPS: 52,4</div>
<div class="t" style="left:140.1px;top:162.52px;font-size:12.5px;font-weight:normal;color:#fff;letter-spacing:0px;">RAM: 8%</div>
<div class="t" style="left:601.4px;top:127.20px;font-size:15px;font-weight:bold;color:#fff;letter-spacing:0px;">Top</div>
<div class="t" style="left:153.8px;top:445.30px;font-size:15px;font-weight:bold;color:#fff;letter-spacing:0.4px;">Right</div>
<div class="t" style="left:598px;top:445.30px;font-size:15px;font-weight:bold;color:#fff;letter-spacing:0px;">Back</div>
<div class="t" style="left:1033px;top:140.15px;font-size:14px;font-weight:bold;color:#fff;letter-spacing:0px;transform:scaleX(1.115);transform-origin:0 0;">Material</div>
<div class="t" style="left:1034.7px;top:214.15px;font-size:14px;font-weight:bold;color:#fff;letter-spacing:0px;">RGB:</div>
<div class="t" style="left:1034.7px;top:254.55px;font-size:14px;font-weight:bold;color:#fff;letter-spacing:0px;">HSB:</div>
<div class="t" style="left:1034.7px;top:293.15px;font-size:14px;font-weight:bold;color:#fff;letter-spacing:0px;">HEX:</div>
<div class="t" style="left:1081.6px;top:213.30px;font-size:15px;font-weight:normal;color:#fff;letter-spacing:0px;transform:scaleX(1.1);transform-origin:0 0;">888</div>
<div class="t" style="left:1119.6px;top:213.30px;font-size:15px;font-weight:normal;color:#fff;letter-spacing:0px;transform:scaleX(1.1);transform-origin:0 0;">888</div>
<div class="t" style="left:1157.8px;top:213.30px;font-size:15px;font-weight:normal;color:#fff;letter-spacing:0px;transform:scaleX(1.1);transform-origin:0 0;">888</div>
<div class="t" style="left:1081.6px;top:253.70px;font-size:15px;font-weight:normal;color:#fff;letter-spacing:0px;transform:scaleX(1.1);transform-origin:0 0;">888</div>
<div class="t" style="left:1119.6px;top:253.70px;font-size:15px;font-weight:normal;color:#fff;letter-spacing:0px;transform:scaleX(1.1);transform-origin:0 0;">888</div>
<div class="t" style="left:1157.8px;top:253.70px;font-size:15px;font-weight:normal;color:#fff;letter-spacing:0px;transform:scaleX(1.1);transform-origin:0 0;">888</div>
<div class="t" style="left:1099.4px;top:292.30px;font-size:15px;font-weight:normal;color:#fff;letter-spacing:0px;transform:scaleX(1.025);transform-origin:0 0;">#6F767B</div>
<div class="t" style="left:1032px;top:412.25px;font-size:14px;font-weight:bold;color:#fff;letter-spacing:0px;transform:scaleX(1.04);transform-origin:0 0;">Layers</div>
<div class="t" style="left:1079.8px;top:477.20px;font-size:13px;font-weight:normal;color:#fff;letter-spacing:0px;">Layer 2</div>
<div class="t" style="left:1079.8px;top:509.40px;font-size:13px;font-weight:normal;color:#fff;letter-spacing:0px;">Layer 1</div>
<div class="t" style="left:1079.8px;top:540.40px;font-size:13px;font-weight:normal;color:#fff;letter-spacing:0px;">Layer 3</div>
<div class="t" style="left:1031.6px;top:604.05px;font-size:14px;font-weight:bold;color:#fff;letter-spacing:0px;transform:scaleX(1.127);transform-origin:0 0;">Palette</div>
<div class="t" style="left:10.6px;top:747.47px;font-size:13.5px;font-weight:normal;color:#fff;letter-spacing:0.03px;">Use Alt + Left Click to turn around, Alt + Middle or Right Click to pan and the Mouse Wheel to zoom in/out.</div>
<div class="t" style="left:1237.6px;top:747.47px;font-size:13.5px;font-weight:normal;color:#fff;letter-spacing:0px;transform:scaleX(1.04);transform-origin:0 0;">Beta 3adgb679</div>
</body></html>
